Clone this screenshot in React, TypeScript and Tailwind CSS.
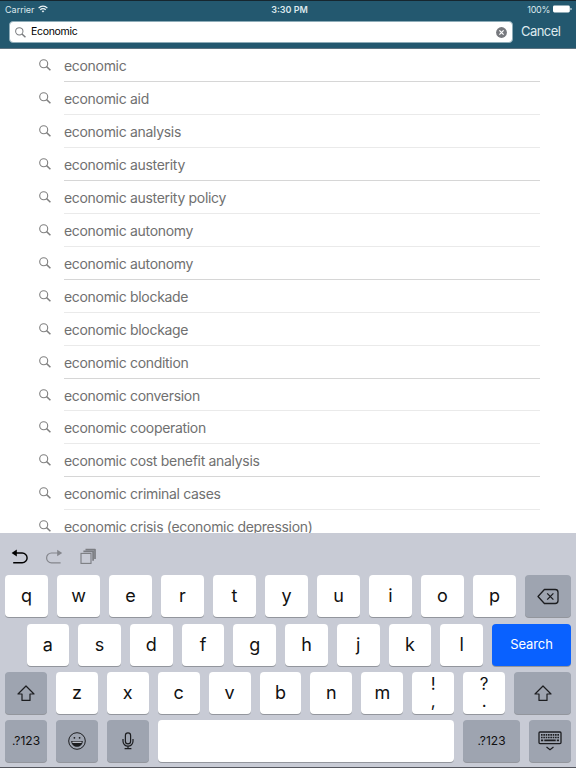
import { useState, type ReactNode } from "react";

const SUGGESTIONS = [
  "economic",
  "economic aid",
  "economic analysis",
  "economic austerity",
  "economic austerity policy",
  "economic autonomy",
  "economic autonomy",
  "economic blockade",
  "economic blockage",
  "economic condition",
  "economic conversion",
  "economic cooperation",
  "economic cost benefit analysis",
  "economic criminal cases",
  "economic crisis (economic depression)",
];

const TOP_ROW = ["q", "w", "e", "r", "t", "y", "u", "i", "o", "p"];
const MIDDLE_ROW = ["a", "s", "d", "f", "g", "h", "j", "k", "l"];
const BOTTOM_ROW = ["z", "x", "c", "v", "b", "n", "m"];

function SearchIcon({ className }: { className: string }) {
  return (
    <svg viewBox="0 0 12 12" className={className} fill="none" stroke="currentColor">
      <circle cx="4.7" cy="4.7" r="4" strokeWidth="1.1" />
      <path d="M7.6 7.6 11.4 11.3" strokeWidth="1.5" />
    </svg>
  );
}

function ShiftIcon() {
  return (
    <svg width="18" height="17" viewBox="0 0 18 17" fill="none" stroke="#1c1d20" strokeWidth="1.2" strokeLinejoin="round">
      <path d="M9 1 17 9H13V15.4H5V9H1Z" />
    </svg>
  );
}

function Key({
  className = "",
  dark = false,
  children,
}: {
  className?: string;
  dark?: boolean;
  children?: ReactNode;
}) {
  return (
    <button
      className={`flex items-center justify-center rounded-[4px] shadow-[0_1px_0_#93969d] ${
        dark ? "bg-[#9ea4b0]" : "bg-white"
      } ${className}`}
    >
      {children}
    </button>
  );
}

function StatusBar() {
  return (
    <div className="grid grid-cols-3 items-center h-4 pl-[5px] pr-1 text-[9px] leading-none text-[#dce8ed]">
      <div className="flex items-center gap-[3px]">
        Carrier
        <svg width="10" height="8" viewBox="0 0 10 8" fill="none" stroke="#eef5f7" strokeWidth="1.3">
          <path d="M.6 3.1C3.1.4 6.9.4 9.4 3.1" />
          <path d="M2.3 4.8C3.8 3.3 6.2 3.3 7.7 4.8" />
          <path d="M3.6 5.9Q5 4.9 6.4 5.9L5 7.6Z" fill="#eef5f7" stroke="none" />
        </svg>
      </div>
      <div className="text-center font-semibold pl-0.5">3:30 PM</div>
      <div className="flex items-center justify-end gap-[3px]">
        <span className="tracking-[-0.3px]">100%</span>
        <svg width="19" height="8" viewBox="0 0 19 8" fill="#fff">
          <rect x="0" y="0.5" width="16.8" height="7" rx="1.4" />
          <path d="M17.5 2.7Q18.7 3 18.7 4T17.5 5.3Z" />
        </svg>
      </div>
    </div>
  );
}

function Keyboard() {
  return (
    <div className="h-[235px] shrink-0 bg-[#c8cbd5] border-b border-[#55575e] text-[#111] px-[5px]">
      <div className="flex items-center h-[42px] pt-[5px] pl-[6px]">
        <svg width="18" height="16" viewBox="0 0 18 16" className="mr-[16px]" fill="none" stroke="#000" strokeWidth="1.4">
          <path d="M3.5 4H11.2A4.9 4.9 0 0 1 11.2 13.8H2.2" />
          <path d="M.6 4 5.8.6V7.4Z" fill="#000" stroke="none" />
        </svg>
        <svg width="18" height="16" viewBox="0 0 18 16" className="mr-[17px]" fill="none" stroke="#84868c" strokeWidth="1.2">
          <path d="M14 4H6.5A4.9 4.9 0 0 0 6.5 13.8H15.6" />
          <path d="M17.2 4 12.2.8V7.2Z" fill="#84868c" stroke="none" />
        </svg>
        <svg width="17" height="17" viewBox="0 0 17 17" fill="none" stroke="#7b7d82">
          <rect x="1" y="5.4" width="10" height="10" strokeWidth="1.1" />
          <path d="M3.4 3.4H13.1V12.8" strokeWidth="1.7" />
          <path d="M5.5 1.6H15V11" strokeWidth="1.7" strokeLinejoin="round" />
        </svg>
      </div>

      <div className="flex gap-[9px] h-[42px] text-[18px]">
        {TOP_ROW.map((letter) => (
          <Key key={letter} className="flex-1 pb-px">
            {letter}
          </Key>
        ))}
        <Key dark className="w-[46px]">
          <svg width="22" height="17" viewBox="0 0 22 17" fill="none" stroke="#1c1d20" strokeWidth="1.3" strokeLinejoin="round">
            <path d="M7.4 1.5H18.2Q21 1.5 21 4.2V12.8Q21 15.5 18.2 15.5H7.4L1 8.5Z" />
            <path d="M10.2 5.4 16.4 11.6M16.4 5.4 10.2 11.6" />
          </svg>
        </Key>
      </div>

      <div className="flex gap-[9px] h-[42px] mt-[7px] pl-[21.5px] text-[18px]">
        {MIDDLE_ROW.map((letter) => (
          <Key key={letter} className="flex-1 pb-px">
            {letter}
          </Key>
        ))}
        <button className="w-[79px] rounded-[4px] bg-[#0961ff] text-white text-[13px] tracking-[-0.1px] shadow-[0_1px_0_#93969d]">
          Search
        </button>
      </div>

      <div className="flex gap-[9px] h-[42px] mt-[6px] text-[18px]">
        <Key dark className="flex-1">
          <ShiftIcon />
        </Key>
        {BOTTOM_ROW.map((letter) => (
          <Key key={letter} className="flex-1 pb-px">
            {letter}
          </Key>
        ))}
        <Key className="flex-1 flex-col text-[17px] leading-[17px]">
          <span>!</span>
          <span>,</span>
        </Key>
        <Key className="flex-1 flex-col text-[17px] leading-[17px]">
          <span>?</span>
          <span>.</span>
        </Key>
        <Key dark className="w-[57px]">
          <ShiftIcon />
        </Key>
      </div>

      <div className="flex gap-[9px] h-[42px] mt-[6px] text-[12px]">
        <Key dark className="w-[42px]">.?123</Key>
        <Key dark className="w-[42px]">
          <svg width="18" height="18" viewBox="0 0 18 18" fill="none" stroke="#1c1d20">
            <circle cx="9" cy="9" r="8.3" strokeWidth="1" />
            <circle cx="6.4" cy="5.8" r="0.9" fill="#1c1d20" stroke="none" />
            <circle cx="11.6" cy="5.8" r="0.9" fill="#1c1d20" stroke="none" />
            <path d="M3.2 8.9H14.8C14.5 16.6 3.5 16.6 3.2 8.9Z" fill="#1c1d20" stroke="none" />
            <path d="M4.4 10.3H13.6" stroke="#c3c7cf" strokeWidth="1.3" />
          </svg>
        </Key>
        <Key dark className="w-[42px]">
          <svg width="12" height="18" viewBox="0 0 12 18" fill="none" stroke="#1c1d20" strokeWidth="1.2">
            <rect x="3.4" y="0.9" width="5.2" height="11" rx="2.6" />
            <path d="M1 7V9.2A5 5 0 0 0 11 9.2V7M6 14.2V16.6M2.6 16.6H9.4" />
          </svg>
        </Key>
        <Key className="flex-1" />
        <Key dark className="w-[57px]">.?123</Key>
        <Key dark className="w-[42px]">
          <svg width="24" height="20" viewBox="0 0 24 20" fill="none" stroke="#1c1d20">
            <rect x="1" y="1" width="22" height="11.6" rx="1" strokeWidth="1.3" />
            <path d="M3 3.9H21M3 6.5H21" strokeWidth="1.6" strokeDasharray="1.6 0.74" />
            <path d="M3 9.3H5.2M6.3 9.3H17.7M18.8 9.3H21" strokeWidth="1.7" />
            <path d="M8.5 16 12 18.8 15.5 16" strokeWidth="1.2" />
          </svg>
        </Key>
      </div>
    </div>
  );
}

export default function App() {
  const [query, setQuery] = useState("Economic");

  return (
    <div className="flex flex-col w-[576px] h-[768px] overflow-hidden bg-white font-['Inter','Liberation_Sans',sans-serif]">
      <header className="h-[49px] shrink-0 bg-[#23586f] border-t border-t-[#16262f] border-b border-b-[#5d7381]">
        <StatusBar />
        <div className="flex items-center pt-[4px] pl-[9px]">
          <div className="flex items-center w-[504px] h-[22px] pl-[5px] pr-[5px] rounded-[4px] border border-[#8eacb8] bg-white">
            <SearchIcon className="size-[11px] text-[#77797c]" />
            <input
              value={query}
              onChange={(e) => setQuery(e.target.value)}
              className="flex-1 ml-[5px] text-[10.5px] tracking-[-0.3px] text-black outline-none"
            />
            <button onClick={() => setQuery("")} aria-label="Clear">
              <svg width="11" height="11" viewBox="0 0 11 11">
                <circle cx="5.5" cy="5.5" r="5.4" fill="#77797e" />
                <path d="M3.4 3.4 7.6 7.6M7.6 3.4 3.4 7.6" stroke="#fff" strokeWidth="1.2" />
              </svg>
            </button>
          </div>
          <button className="ml-2 pb-px text-[13px] tracking-[-0.55px] leading-none text-[#dfeaee]">Cancel</button>
        </div>
      </header>

      <ul className="flex-1 min-h-0 overflow-hidden pl-[39px] pr-9">
        {SUGGESTIONS.map((text, i) => (
          <li key={i} className="flex h-[32.96px]">
            <SearchIcon className="size-3 mt-[10px] mr-[13px] text-[#808080]" />
            <span
              className={`flex-1 border-b text-[14px] tracking-[-0.31px] leading-[33px] text-[#707070] ${
                i % 3 === 0 ? "border-[#d6d6d6]" : "border-[#eaeaea]"
              }`}
            >
              {text}
            </span>
          </li>
        ))}
      </ul>

      <Keyboard />
    </div>
  );
}
